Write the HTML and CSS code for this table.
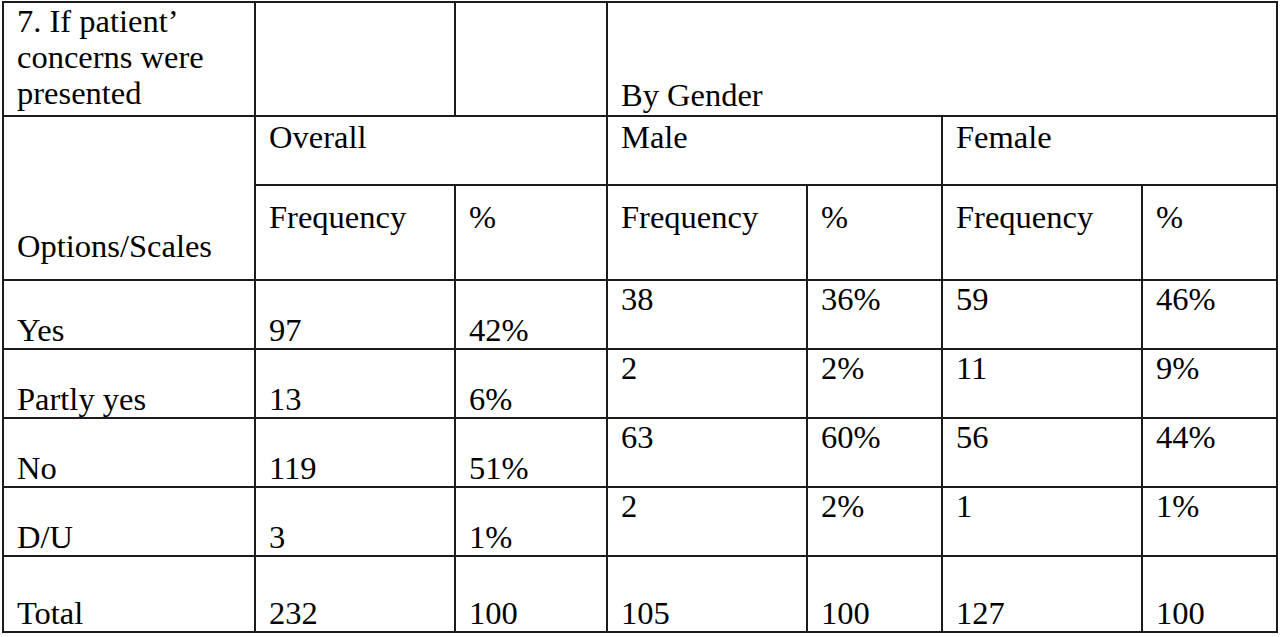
FILE: index.html
```html
<!DOCTYPE html>
<html>
<head>
<meta charset="utf-8">
<link rel="stylesheet" href="styles.css">
</head>
<body>
<table class="tbl">
  <colgroup>
    <col class="c1"><col class="c2"><col class="c3"><col class="c4"><col class="c5"><col class="c6"><col class="c7">
  </colgroup>
  <tr class="r-title">
    <td class="top">7. If patient’ concerns were presented</td>
    <td></td>
    <td></td>
    <td colspan="4" class="bottom pb2">By Gender</td>
  </tr>
  <tr class="r-group">
    <td rowspan="2" class="bottom pb15">Options/Scales</td>
    <td colspan="2" class="top pt2">Overall</td>
    <td colspan="2" class="top pt2">Male</td>
    <td colspan="2" class="top pt2">Female</td>
  </tr>
  <tr class="r-head">
    <td class="top pt13">Frequency</td>
    <td class="top pt13">%</td>
    <td class="top pt13">Frequency</td>
    <td class="top pt13">%</td>
    <td class="top pt13">Frequency</td>
    <td class="top pt13">%</td>
  </tr>
  <tr class="r-data">
    <td class="bottom">Yes</td>
    <td class="bottom">97</td>
    <td class="bottom">42%</td>
    <td class="top">38</td>
    <td class="top">36%</td>
    <td class="top">59</td>
    <td class="top">46%</td>
  </tr>
  <tr class="r-data">
    <td class="bottom">Partly yes</td>
    <td class="bottom">13</td>
    <td class="bottom">6%</td>
    <td class="top">2</td>
    <td class="top">2%</td>
    <td class="top">11</td>
    <td class="top">9%</td>
  </tr>
  <tr class="r-data">
    <td class="bottom">No</td>
    <td class="bottom">119</td>
    <td class="bottom">51%</td>
    <td class="top">63</td>
    <td class="top">60%</td>
    <td class="top">56</td>
    <td class="top">44%</td>
  </tr>
  <tr class="r-data">
    <td class="bottom">D/U</td>
    <td class="bottom">3</td>
    <td class="bottom">1%</td>
    <td class="top">2</td>
    <td class="top">2%</td>
    <td class="top">1</td>
    <td class="top">1%</td>
  </tr>
  <tr class="r-total">
    <td class="bottom">Total</td>
    <td class="bottom">232</td>
    <td class="bottom">100</td>
    <td class="bottom">105</td>
    <td class="bottom">100</td>
    <td class="bottom">127</td>
    <td class="bottom">100</td>
  </tr>
</table>
</body>
</html>
```

FILE: styles.css
```css
html, body {
  margin: 0;
  padding: 0;
  background: #ffffff;
}

body {
  padding: 1px 0 0 2px;
}

.tbl {
  border-collapse: collapse;
  table-layout: fixed;
  width: 1274px;
  font-family: "Liberation Serif", "Times New Roman", serif;
  font-size: 32.5px;
  line-height: 36px;
  color: #000000;
}

.c1 { width: 252px; }
.c2 { width: 200px; }
.c3 { width: 152px; }
.c4 { width: 200px; }
.c5 { width: 135px; }
.c6 { width: 200px; }
.c7 { width: 135px; }

.tbl td {
  border: 2px solid #1c1c1c;
  padding: 0 10px 0 13px;
}

.r-title { height: 114px; }
.r-group { height: 69px; }
.r-head { height: 95px; }
.r-data { height: 69px; }
.r-total { height: 76px; }

.tbl td.top { vertical-align: top; }
.tbl td.bottom { vertical-align: bottom; }

.tbl td.pt2 { padding-top: 2px; }
.tbl td.pt13 { padding-top: 13px; }
.tbl td.pb2 { padding-bottom: 2px; }
.tbl td.pb15 { padding-bottom: 15px; }
```
